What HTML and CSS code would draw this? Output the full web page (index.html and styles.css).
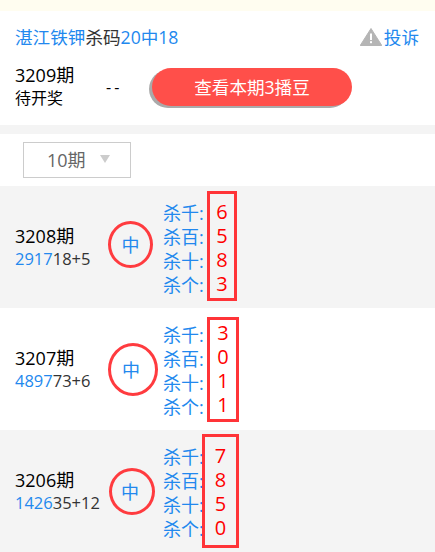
FILE: index.html
```html
<!DOCTYPE html>
<html lang="zh">
<head>
<meta charset="utf-8">
<title>杀码</title>
<link rel="stylesheet" href="styles.css">
</head>
<body>
<div class="notice"></div>
<section class="head">
  <div class="title-row">
    <div class="title"><span class="blue">湛江铁钾</span>杀码<span class="blue">20中18</span></div>
    <div class="report">
      <svg class="warn" viewBox="0 0 22 18" width="22" height="18"><path d="M11 0.5 L21.8 17.5 L0.2 17.5 Z" fill="#b5b5b5" stroke="#b5b5b5" stroke-linejoin="round"/><rect x="10" y="5.5" width="2" height="6.5" fill="#fff"/><rect x="10" y="13.2" width="2" height="2" fill="#fff"/></svg>
      <span class="blue">投诉</span>
    </div>
  </div>
  <div class="current">
    <div class="cur-info">
      <div class="cur-num">3209期</div>
      <div class="cur-state">待开奖</div>
    </div>
    <div class="dash">--</div>
    <div class="btn">查看本期3播豆</div>
  </div>
</section>
<div class="gap"></div>
<section class="filter">
  <div class="select"><span>10期</span><i class="tri"></i></div>
</section>
<section class="row gray">
  <div class="info"><div class="period">3208期</div><div class="code"><span class="blue">2917</span>18+5</div></div>
  <div class="hit-wrap"><div class="hit hit-a">中</div></div>
  <div class="labels"><div>杀千:</div><div>杀百:</div><div>杀十:</div><div>杀个:</div></div>
  <div class="box box-a"><div>6</div><div>5</div><div>8</div><div>3</div></div>
</section>
<section class="row">
  <div class="info"><div class="period">3207期</div><div class="code"><span class="blue">4897</span>73+6</div></div>
  <div class="hit-wrap"><div class="hit hit-b">中</div></div>
  <div class="labels"><div>杀千:</div><div>杀百:</div><div>杀十:</div><div>杀个:</div></div>
  <div class="box box-b"><div>3</div><div>0</div><div>1</div><div>1</div></div>
</section>
<section class="row gray">
  <div class="info"><div class="period">3206期</div><div class="code"><span class="blue">1426</span>35+12</div></div>
  <div class="hit-wrap"><div class="hit hit-c">中</div></div>
  <div class="labels"><div>杀千:</div><div>杀百:</div><div>杀十:</div><div>杀个:</div></div>
  <div class="box box-c"><div>7</div><div>8</div><div>5</div><div>0</div></div>
</section>
</body>
</html>
```
FILE: styles.css
```css
* { box-sizing: border-box; }
html, body { margin: 0; padding: 0; }
body {
  width: 435px;
  height: 552px;
  overflow: hidden;
  background: #fff;
  color: #000;
  font-family: "Open Sans", "Noto Sans CJK SC", sans-serif;
  font-weight: 400;
}
.blue { color: #2288ee; }
.notice { height: 11px; background: #fffdf0; }
.head { height: 114px; padding: 13px 16px 0 15px; }
.title-row { display: flex; justify-content: space-between; align-items: center; height: 26px; }
.title { font-size: 17.6px; line-height: 26px; color: #333; }
.report { display: flex; align-items: center; gap: 2px; font-size: 17.6px; line-height: 26px; }
.warn { display: block; }
.current { display: flex; align-items: center; margin-top: 14px; }
.cur-info { width: 91px; }
.cur-num { font-size: 18px; line-height: 23px; }
.cur-state { font-size: 16px; line-height: 23px; }
.dash { width: 46px; font-size: 16px; line-height: 23px; letter-spacing: 3px; color: #000; }
.btn {
  width: 200px;
  height: 38px;
  border-radius: 19px;
  background: #ff4f4a;
  box-shadow: -3px 2px 0 #aaa;
  color: #fff;
  font-size: 17.6px;
  line-height: 38px;
  text-align: center;
}
.gap { height: 9px; background: #f4f4f4; }
.filter { height: 52px; padding: 8px 0 0 23px; }
.select {
  display: flex;
  align-items: center;
  width: 108px;
  height: 36px;
  padding: 0 0 2px 23px;
  border: 1px solid #ccc;
  color: #666;
  font-size: 18px;
}
.tri {
  margin-left: 14px;
  border-left: 5.5px solid transparent;
  border-right: 5.5px solid transparent;
  border-top: 8px solid #ccc;
}
.row { display: flex; align-items: center; height: 122px; padding-left: 15px; }
.gray { background: #f4f4f4; }
.info { width: 92px; }
.period { font-size: 18px; line-height: 23px; color: #000; }
.code { font-size: 16.5px; line-height: 22px; color: #333; }
.hit-wrap { width: 56px; display: flex; }
.hit {
  display: flex;
  align-items: center;
  justify-content: center;
  border: 3px solid #ff3b3f;
  border-radius: 50%;
  color: #2288ee;
  font-size: 18px;
}
.hit-a { width: 45px; height: 47px; margin: 0 0 6px 1px; }
.hit-b { width: 50px; height: 53px; margin-left: 1px; padding-right: 4px; }
.hit-c { width: 46px; height: 47px; margin-left: 2px; padding-right: 4px; }
.labels { width: 44px; margin-top: 3px; color: #2288ee; font-size: 18px; line-height: 24px; white-space: nowrap; }
.box {
  border: 3px solid #ff3438;
  color: #f00;
  font-size: 20px;
  line-height: 24px;
  text-align: center;
  display: flex;
  flex-direction: column;
  justify-content: center;
}
.box-a { width: 30px; height: 110px; margin-top: -2px; padding-top: 4px; }
.box-b { width: 32px; height: 105px; }
.box-c { width: 37px; height: 114px; margin-left: -5px; padding-top: 2px; position: relative; background: #f4f4f4; }
```
